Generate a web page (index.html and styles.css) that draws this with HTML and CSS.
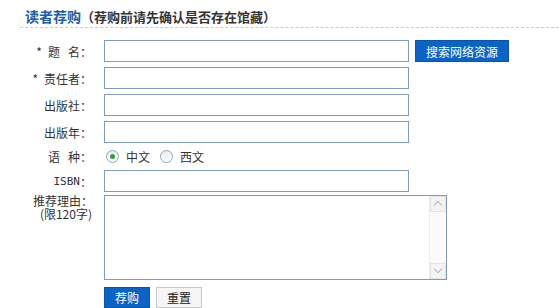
FILE: index.html
```html
<!doctype html>
<html lang="zh-CN">
<head>
    <meta charset="utf-8">
    <title>读者荐购</title>
    <link rel="stylesheet" href="styles.css">
</head>
<body>
    <div class="panel">
        <h2 class="panel-title"><span class="title-main">读者荐购</span><span class="title-note">（荐购前请先确认是否存在馆藏）</span></h2>
        <form class="recommend-form">
            <label class="field-label"><span class="star">*</span>题&nbsp;&nbsp;&nbsp;名：</label>
            <div class="field-row">
                <input type="text" class="text-input">
                <button type="button" class="btn btn-search">搜索网络资源</button>
            </div>

            <label class="field-label"><span class="star">*</span>责任者：</label>
            <div class="field-row"><input type="text" class="text-input"></div>

            <label class="field-label">出版社：</label>
            <div class="field-row"><input type="text" class="text-input"></div>

            <label class="field-label">出版年：</label>
            <div class="field-row"><input type="text" class="text-input"></div>

            <label class="field-label">语&nbsp;&nbsp;&nbsp;种：</label>
            <div class="field-row radio-row">
                <span class="radio checked"></span><span class="radio-text">中文</span>
                <span class="radio"></span><span class="radio-text">西文</span>
            </div>

            <label class="field-label"><span class="latin">ISBN</span>：</label>
            <div class="field-row"><input type="text" class="text-input"></div>

            <label class="label-top"><span class="reason">推荐理由：</span><span class="limit">(限120字)</span></label>
            <div class="field-row memo-row">
                <div class="memo">
                    <textarea class="memo-text"></textarea>
                    <div class="scrollbar">
                        <span class="arrow arrow-up"></span>
                        <span class="arrow arrow-down"></span>
                    </div>
                </div>
            </div>

            <div></div>
            <div class="actions">
                <button type="button" class="btn btn-submit">荐购</button>
                <button type="button" class="btn btn-reset">重置</button>
            </div>
        </form>
    </div>
</body>
</html>
```

FILE: styles.css
```css
body {
    margin: 0;
    background-color: #ffffff;
    font-family: "Noto Sans CJK SC", "DejaVu Sans", sans-serif;
    font-size: 12px;
    color: #333;
}
.panel {
    padding-left: 20px;
}
.panel-title {
    margin: 0;
    height: 27px;
    padding-left: 5px;
    border-bottom: 1px dashed #ccc;
    font-weight: bold;
    line-height: 28px;
    white-space: nowrap;
}
.title-main {
    font-size: 14px;
    color: #1c5ea6;
}
.title-note {
    font-size: 13px;
    color: #333;
}
.recommend-form {
    display: grid;
    grid-template-columns: 76px 1fr;
    column-gap: 8px;
    row-gap: 5px;
    margin-top: 12px;
}
.field-label {
    display: flex;
    justify-content: flex-end;
    align-items: center;
    padding-right: 4px;
    white-space: nowrap;
}
.star {
    margin-right: 6px;
    font-size: 12px;
    color: #333;
}
.latin {
    font-family: "DejaVu Sans Mono", monospace;
    font-size: 11px;
}
.label-top {
    display: flex;
    flex-direction: column;
    align-items: flex-end;
    margin-top: -3px;
    padding-right: 3px;
    white-space: nowrap;
}
.reason {
    display: block;
    line-height: 13px;
}
.limit {
    display: block;
    padding-right: 1px;
    line-height: 13px;
}
.field-row {
    display: flex;
    align-items: center;
    gap: 6px;
}
.text-input {
    box-sizing: border-box;
    width: 305px;
    height: 22px;
    margin: 0;
    border: 1px solid #7f9db9;
    background-color: #fff;
}
.btn {
    box-sizing: border-box;
    height: 21px;
    padding: 0;
    font-family: "Noto Sans CJK SC", sans-serif;
    font-size: 12px;
    cursor: pointer;
}
.btn-search {
    width: 94px;
    height: 22px;
    border: 1px solid #0a55a8;
    background-color: #0a64c8;
    color: #fff;
}
.radio-row {
    height: 17px;
    gap: 0;
    padding-left: 2px;
}
.radio {
    box-sizing: border-box;
    width: 13px;
    height: 13px;
    border: 1px solid #8ea6bf;
    border-radius: 50%;
    background: linear-gradient(#e8ecf0, #ffffff);
    position: relative;
}
.radio.checked::after {
    content: "";
    position: absolute;
    left: 3px;
    top: 3px;
    width: 5px;
    height: 5px;
    border-radius: 50%;
    background-color: #2fa12f;
}
.radio-text {
    margin: 0 10px 0 7px;
}
.memo-row {
    margin-top: -2px;
}
.memo {
    box-sizing: border-box;
    width: 343px;
    height: 85px;
    display: flex;
    border: 1px solid #7f9db9;
}
.memo-text {
    flex-grow: 1;
    border: none;
    resize: none;
    margin: 0;
    padding: 0;
    outline: none;
}
.scrollbar {
    width: 16px;
    display: flex;
    flex-direction: column;
    justify-content: space-between;
    background-color: #fbfbfb;
    border-left: 1px solid #eee;
}
.arrow {
    height: 16px;
    background-color: #f4f4f4;
    border: 1px solid #e4e4e4;
    box-sizing: border-box;
    position: relative;
}
.arrow::after {
    content: "";
    position: absolute;
    left: 4px;
    width: 5px;
    height: 5px;
    border-left: 1px solid #b8b8b8;
    border-top: 1px solid #b8b8b8;
}
.arrow-up::after {
    top: 5px;
    transform: rotate(45deg);
}
.arrow-down::after {
    top: 2px;
    transform: rotate(225deg);
}
.actions {
    display: flex;
    gap: 6px;
    margin-top: 2px;
}
.btn-submit {
    width: 46px;
    border: 1px solid #0a55a8;
    background-color: #0a64c8;
    color: #fff;
}
.btn-reset {
    width: 46px;
    border: 1px solid #c8c8c8;
    background-color: #f6f6f6;
    color: #222;
}
```
